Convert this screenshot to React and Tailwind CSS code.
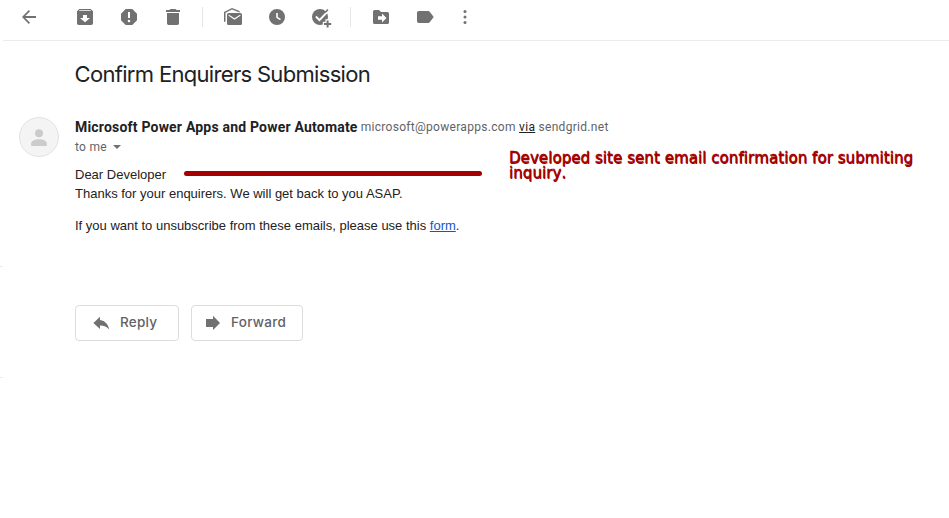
const Icon = ({ children, className = '' }) => (
  <svg viewBox="0 0 20 20" className={`block h-5 w-5 shrink-0 fill-[#717171] ${className}`}>{children}</svg>
);

function Toolbar() {
  return (
    <div className="ml-[3px] flex h-[41px] items-start border-b border-[#ebebeb] pl-4 pt-[7px]">
      <Icon className="mr-9">
        <path d="M17 9.1H6.3L11 4.3 9.8 3.1 3 10l6.8 6.9 1.2-1.2-4.7-4.8H17z" />
      </Icon>
      <Icon className="mr-6">
        <path fillRule="evenodd" d="M4.2 2h11.6L18 4.2v12q0 1.8-1.8 1.8H3.8Q2 18 2 16.2v-12zM4.6 3.2l-.8.9h12.4l-.8-.9zM8 8v3H5l5 4.2 5-4.2h-3V8z" />
      </Icon>
      <Icon className="mr-6">
        <path fillRule="evenodd" d="M6.7 2h6.6L18 6.7v6.6L13.3 18H6.7L2 13.3V6.7zM9 5v6h2V5zM10 12.7a1.3 1.3 0 1 0 0 2.6 1.3 1.3 0 0 0 0-2.6z" />
      </Icon>
      <Icon>
        <path d="M7.5 2h5l1 1H17v2H3V3h3.500zM4 6h12v10.300q0 1.700-1.700 1.700H5.700Q4 18 4 16.300z" />
      </Icon>
      <div className="ml-[19px] mr-5 h-5 w-px bg-[#e6e6e6]" />
      <Icon className="mr-6">
        <path d="M1 14.700V5L9 .9 16.600 4v1.400L9 2.600 2.500 5.800v8.900z" />
        <path fillRule="evenodd" d="M5.500 5.900h12q1.500 0 1.500 1.500v9q0 1.500-1.500 1.500h-12Q4 17.900 4 16.400v-9q0-1.500 1.500-1.500zM5.600 7.400v1.400l5.900 4 5.900-4V7.400l-5.900 3.800z" />
      </Icon>
      <Icon className="mr-6">
        <path fillRule="evenodd" d="M10 2a8 8 0 1 0 0 16 8 8 0 0 0 0-16zM9.200 6v4.800l3.900 2.500.8-1.300-3.100-1.900V6z" />
      </Icon>
      <Icon className="overflow-visible">
        <circle cx="9" cy="10" r="8" />
        <path d="M4.900 9.500l3.600 3.600L17.800 3.400" fill="none" stroke="#fff" strokeWidth="2" />
        <path d="M13.700 4.900l2.600-2.900 1.200 1-2.700 3z" />
        <path d="M13 16h2.600v-2.600h2V16h2.600v2h-2.600v2.600h-2V18H13z" stroke="#fff" strokeWidth="2.400" paintOrder="stroke" />
      </Icon>
      <div className="ml-[19px] mr-5 h-5 w-px bg-[#e6e6e6]" />
      <Icon className="mr-6">
        <path fillRule="evenodd" d="M3.600 3H8l2 2h6.400Q18 5 18 6.600v8.800q0 1.600-1.600 1.600H3.600Q2 17 2 15.400V4.600Q2 3 3.600 3zM7 9.200v3.600h4V15.500l4.500-4.500L11 6.500v2.700z" />
      </Icon>
      <Icon className="mr-5">
        <path d="M3.700 4h9.500q.9 0 1.500.8L18.700 10l-4 5.200q-.6.800-1.500.8H3.700Q2 16 2 14.300V5.700Q2 4 3.700 4z" />
      </Icon>
      <Icon>
        <circle cx="10" cy="4.600" r="1.500" />
        <circle cx="10" cy="10" r="1.500" />
        <circle cx="10" cy="15.500" r="1.500" />
      </Icon>
    </div>
  );
}

function Annotation() {
  return (
    <>
      <div className="absolute left-[183.5px] top-[171px] h-[5px] w-[298px] rounded-full bg-[#a40000]" />
      <p className="absolute left-[509px] top-[151px] whitespace-nowrap font-['DejaVu_Sans',sans-serif] text-[15px] leading-[15px] tracking-[0.07px] text-[#a40000] [font-kerning:none] [-webkit-text-stroke:0.4px_#a40000] [text-shadow:0.5px_1px_0_#a40000]">
        Developed site sent email confirmation for submiting
        <br />
        inquiry.
      </p>
    </>
  );
}

export default function App() {
  return (
    <div className="relative h-[518px] w-[949px] overflow-hidden bg-white font-['Roboto',sans-serif]">
      <Toolbar />
      <h1 className="ml-[74.5px] mt-[19px] h-7 whitespace-nowrap font-['Inter',sans-serif] text-[22px] font-normal leading-7 tracking-[-0.68px] text-[#202124]">
        Confirm Enquirers Submission
      </h1>
      <div className="mt-[29px] flex pl-[19px]">
        <div className="flex h-10 w-10 shrink-0 items-center justify-center rounded-full border border-[#e2e2e2] bg-[#f4f4f4]">
          <svg viewBox="0 0 16 17" className="mt-px h-[17px] w-4 fill-[#cbcbcb]">
            <circle cx="8" cy="4.200" r="4" />
            <path d="M.2 17v-2.500C.2 11.700 4.500 10.300 8 10.300s7.800 1.400 7.800 4.200V17z" />
          </svg>
        </div>
        <div className="ml-4 whitespace-nowrap">
          <div className="flex h-5 items-start leading-5">
            <span className="text-[14px] font-bold tracking-[0.2px] text-[#202124]">Microsoft Power Apps and Power Automate</span>
            <span className="ml-[3px] text-[12px] leading-5 tracking-[0.3px] text-[#5f6368]">
              microsoft@powerapps.com <span className="text-[#222] underline">via</span> sendgrid.net
            </span>
          </div>
          <div className="flex h-5 items-center text-[12px] leading-5 tracking-[0.3px] text-[#5f6368]">
            to me
            <svg viewBox="0 0 8 4" className="ml-1.5 h-1 w-2 fill-[#717171]"><path d="M0 0h8L4 4z" /></svg>
          </div>
        </div>
      </div>
      <div className="ml-[75px] mt-2 whitespace-nowrap font-['Liberation_Sans',sans-serif] text-[13px] leading-[19px] text-[#222]">
        <p>Dear Developer</p>
        <p>Thanks for your enquirers. We will get back to you ASAP.</p>
        <p className="mt-[13px]">
          If you want to unsubscribe from these emails, please use this <span className="text-[#1155cc] underline">form</span>.
        </p>
      </div>
      <div className="mt-[31px] h-px w-[3px] bg-[#ebebeb]" />
      <div className="ml-[75px] mt-[38px] flex gap-3 font-['Inter',sans-serif] text-[13.5px] font-medium text-[#5f6368]">
        <button className="flex h-9 w-[104px] items-center rounded-[4px] border border-[#dadce0] pl-4">
          <Icon><path d="M8 7.100V3.700L1.400 10 8 16v-3.500c4 0 7 1.300 9.200 4.100C16.300 11.700 13.200 7.700 8 7.100z" /></Icon>
          <span className="ml-2 pb-0.5 leading-5 tracking-[0.25px]">Reply</span>
        </button>
        <button className="flex h-9 w-28 items-center rounded-[4px] border border-[#dadce0] pl-3">
          <Icon><path d="M2 6h7V2.700L16 10l-7 7v-3H2z" /></Icon>
          <span className="ml-[7px] pb-0.5 leading-5 tracking-[0.3px]">Forward</span>
        </button>
      </div>
      <div className="mt-9 h-px w-[3px] bg-[#ebebeb]" />
      <Annotation />
    </div>
  );
}
